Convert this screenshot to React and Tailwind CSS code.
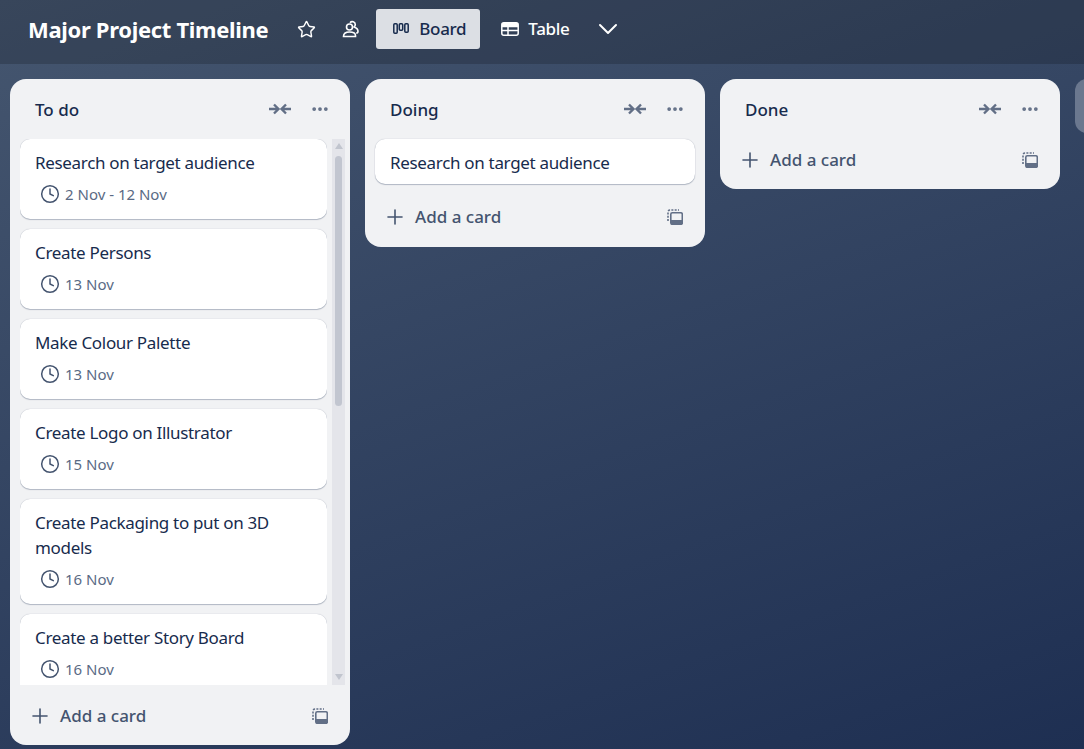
import { ChevronDown, Clock, Ellipsis, Plus, Star } from "lucide-react";

const FONT = "font-['Noto_Sans','Open_Sans',sans-serif]";

const todo = [
  { title: "Research on target audience", date: "2 Nov - 12 Nov" },
  { title: "Create Persons", date: "13 Nov" },
  { title: "Make Colour Palette", date: "13 Nov" },
  { title: "Create Logo on Illustrator", date: "15 Nov" },
  { title: "Create Packaging to put on 3D models", date: "16 Nov" },
  { title: "Create a better Story Board", date: "16 Nov" },
];

const CollapseIcon = () => (
  <svg width="24" height="16" viewBox="0 0 24 16" fill="none" stroke="#626f86" strokeWidth="2.4">
    <path d="M1 8h9M6 3.500l4.500 4.500-4.500 4.500M23 8h-9M18 3.500l-4.500 4.500 4.500 4.500" />
  </svg>
);

const TemplateIcon = () => (
  <svg width="16" height="16" viewBox="0 0 16 16" fill="none" stroke="#626f86" strokeWidth="1.6">
    <path d="M1 12V3a2 2 0 0 1 2-2h9" strokeDasharray="2 1.3" />
    <rect x="3.800" y="3.800" width="11.500" height="11.500" rx="1.500" />
    <path d="M4 11h11v4H4z" fill="#626f86" stroke="none" />
  </svg>
);

const BoardIcon = () => (
  <svg width="16" height="12" viewBox="0 0 16 12" fill="none" stroke="#172b4d" strokeWidth="1.500">
    <rect x="0.800" y="0.800" width="3.400" height="9.500" rx="1" />
    <rect x="6.300" y="0.800" width="3.400" height="6.500" rx="1" />
    <rect x="11.800" y="0.800" width="3.400" height="8.500" rx="1" />
  </svg>
);

const TableIcon = () => (
  <svg width="18" height="14" viewBox="0 0 18 14" fill="none" stroke="white" strokeWidth="1.500">
    <rect x="0.800" y="0.800" width="16.400" height="12.400" rx="2" />
    <path d="M1 4.500h16M1 8.500h16M7 4.500v8.500" />
    <path d="M1 1h16v3.500H1z" fill="white" stroke="none" />
  </svg>
);

const MembersIcon = () => (
  <svg width="20" height="20" viewBox="0 0 20 20" fill="none" stroke="white" strokeWidth="1.600">
    <circle cx="8.500" cy="8" r="3" />
    <path d="M2.500 17.500c0-3 2.500-4.500 6-4.500s6 1.500 6 3.500v1z" />
    <path d="M9 3.700a3 3 0 0 1 5.300 1.800c0 1-.4 1.800-1.100 2.400 2.200.8 3.800 2.300 3.800 4.300 0 1.200-.7 1.800-1.800 1.800" />
  </svg>
);

const ListHeader = ({ title }) => (
  <div className="flex items-center justify-between pl-[25px] pr-[20px] h-[60px] shrink-0">
    <h2 className="mt-[2px] text-[17px] font-medium text-[#172b4d]">{title}</h2>
    <div className="flex items-center gap-[18px]">
      <CollapseIcon />
      <Ellipsis size={20} color="#626f86" strokeWidth={2.5} />
    </div>
  </div>
);

const AddCard = ({ className }) => (
  <div className={`flex items-center justify-between pl-[18px] pr-[22px] shrink-0 ${className}`}>
    <div className="flex items-center gap-[8px] text-[#44546f]">
      <Plus size={24} strokeWidth={1.6} />
      <span className="text-[17px] font-medium">Add a card</span>
    </div>
    <TemplateIcon />
  </div>
);

const Card = ({ title, date }) => (
  <div className={`bg-white rounded-[10px] shadow-[0_1px_1px_#091e4240,0_0_1px_#091e424f] px-[15px] pt-[11px] shrink-0 ${date ? "pb-[15px]" : "pb-[9px]"}`}>
    <p className="text-[17px] tracking-[-0.32px] leading-[25px] text-[#172b4d]">{title}</p>
    {date && (
      <div className="flex items-center gap-[5px] mt-[9px] pl-[5px] text-[#44546f]">
        <Clock size={20} strokeWidth={1.8} />
        <span className="text-[15px] leading-[20px] text-[#5a6a84]">{date}</span>
      </div>
    )}
  </div>
);

export default function App() {
  return (
    <div className={`${FONT} h-[749px] w-[1084px] overflow-hidden flex flex-col bg-[linear-gradient(160deg,#45566f,#1e2f52)]`}>
      <header className="h-[64px] shrink-0 bg-[#0000002e] flex items-center pl-[28px] pb-[6px] text-white">
        <h1 className="text-[22px] tracking-[-0.32px] font-bold">Major Project Timeline</h1>
        <Star size={19} strokeWidth={1.8} className="ml-[29px]" />
        <div className="ml-[25px]"><MembersIcon /></div>
        <div className="ml-[15px] h-[40px] w-[104px] pl-[17px] bg-[#dcdfe4] rounded-[3px] flex items-center gap-[10px] text-[#172b4d]">
          <BoardIcon />
          <span className="text-[17px] tracking-[-0.32px] font-medium">Board</span>
        </div>
        <div className="ml-[21px] flex items-center gap-[9px]">
          <TableIcon />
          <span className="text-[17px] tracking-[-0.32px] font-medium">Table</span>
        </div>
        <ChevronDown size={32} strokeWidth={1.5} className="ml-[22px]" />
      </header>
      <main className="flex items-start gap-[15px] pl-[10px] pt-[15px]">
        <section className="w-[340px] h-[666px] shrink-0 bg-[#f1f2f4] rounded-[16px] flex flex-col overflow-hidden">
          <ListHeader title="To do" />
          <div className="flex-1 min-h-0 flex pl-[10px] pr-[5px] overflow-hidden">
            <div className="w-[307px] flex flex-col gap-[10px] overflow-hidden">
              {todo.map((c) => (
                <Card key={c.title} {...c} />
              ))}
            </div>
            <div className="ml-[5px] w-[13px] bg-[#e4e5ea] flex flex-col items-center -mt-[2px]">
              <div className="mt-[6px] w-0 h-0 border-x-[4px] border-x-transparent border-b-[6px] border-b-[#c1c5ce]" />
              <div className="mt-[7px] w-[7px] h-[250px] rounded-[4px] bg-[#c2c6d0]" />
              <div className="mt-auto mb-[5px] w-0 h-0 border-x-[4px] border-x-transparent border-t-[6px] border-t-[#c1c5ce]" />
            </div>
          </div>
          <AddCard className="h-[60px] pt-[1px]" />
        </section>
        <section className="w-[340px] shrink-0 bg-[#f1f2f4] rounded-[16px] flex flex-col">
          <ListHeader title="Doing" />
          <div className="px-[10px]">
            <Card title="Research on target audience" />
          </div>
          <AddCard className="h-[63px] pt-[3px]" />
        </section>
        <section className="w-[340px] shrink-0 bg-[#f1f2f4] rounded-[16px] flex flex-col">
          <ListHeader title="Done" />
          <AddCard className="h-[51px] -mt-[1px] pb-[7px]" />
        </section>
        <div className="w-[40px] h-[54px] shrink-0 bg-[#6b788f] rounded-[12px]" />
      </main>
    </div>
  );
}
